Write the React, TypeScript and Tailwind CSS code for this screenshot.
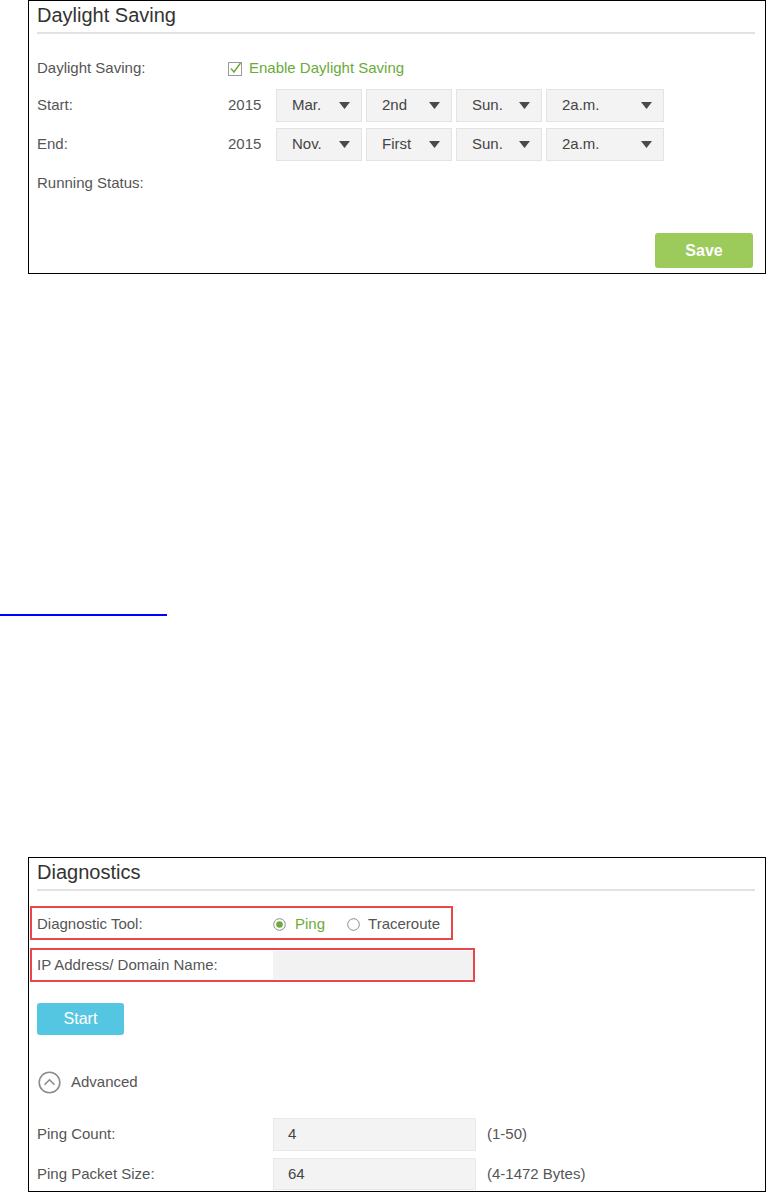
import React from 'react';

const font = "font-['Liberation_Sans',Arial,sans-serif]";

function Arrow() {
  return (
    <svg width="11" height="7" viewBox="0 0 11 7" className="shrink-0">
      <path d="M0 0 H11 L5.5 7 Z" fill="#4a4a4a" />
    </svg>
  );
}

function Select({ value, width }: { value: string; width: string }) {
  return (
    <div
      className={`${width} h-full flex items-center justify-between pl-[15px] pr-[11px] bg-[#f3f3f3] border border-[#e3e3e3] text-[15px] text-[#444]`}
    >
      <span>{value}</span>
      <Arrow />
    </div>
  );
}

function DateRow({ label, values }: { label: string; values: string[] }) {
  return (
    <div className="flex items-center h-[33px]">
      <div className="w-[191px] text-[15px] text-[#555]">{label}</div>
      <div className="w-[48px] text-[15px] text-[#555]">2015</div>
      <div className="flex gap-[4px] h-full">
        <Select value={values[0]} width="w-[86px]" />
        <Select value={values[1]} width="w-[86px]" />
        <Select value={values[2]} width="w-[86px]" />
        <Select value={values[3]} width="w-[118px]" />
      </div>
    </div>
  );
}

function PanelTitle({ title }: { title: string }) {
  return (
    <>
      <div className="pl-[8px] pt-[3px] h-[26px] leading-[23px] text-[20px] text-[#333]">
        {title}
      </div>
      <div className="ml-[8px] mr-[10px] mt-[5px] h-[2px] bg-[#e2e2e2]" />
    </>
  );
}

function Field({ value }: { value: string }) {
  return (
    <div className="w-[203px] h-full flex items-center pl-[14px] bg-[#f3f3f3] border border-[#e8e8e8] text-[15px] text-[#444]">
      {value}
    </div>
  );
}

export default function App() {
  return (
    <div className={`w-[767px] h-[1193px] bg-white overflow-hidden ${font}`}>
      {/* Daylight saving panel */}
      <div className="ml-[28px] w-[738px] h-[274px] border border-black">
        <PanelTitle title="Daylight Saving" />
        <div className="pl-[8px]">
          <div className="mt-[17px] h-[35px] flex items-center">
            <div className="w-[191px] text-[15px] text-[#555]">Daylight Saving:</div>
            <svg width="15" height="15" viewBox="0 0 15 15" className="mr-[6px]">
              <rect x="0.5" y="1.5" width="13" height="13" fill="none" stroke="#9a9a9a" />
              <path d="M3 7.5 L6 11 L12.5 2" fill="none" stroke="#6aab3a" strokeWidth="1.4" />
            </svg>
            <span className="text-[15px] text-[#6aab3a]">Enable Daylight Saving</span>
          </div>
          <div className="mt-[3px]">
            <DateRow label="Start:" values={['Mar.', '2nd', 'Sun.', '2a.m.']} />
          </div>
          <div className="mt-[6px]">
            <DateRow label="End:" values={['Nov.', 'First', 'Sun.', '2a.m.']} />
          </div>
          <div className="mt-[5px] h-[34px] flex items-center text-[15px] text-[#555]">
            Running Status:
          </div>
          <div className="mt-[33px] flex justify-end pr-[12px]">
            <button className="w-[98px] h-[35px] rounded-[3px] bg-[#9ccb5b] text-white text-[16px] font-bold">
              Save
            </button>
          </div>
        </div>
      </div>

      {/* link underline */}
      <div className="mt-[340px] w-[167px] h-[2px] bg-[#0000ff]" />

      {/* Diagnostics panel */}
      <div className="mt-[241px] ml-[28px] w-[738px] h-[335px] border border-black">
        <PanelTitle title="Diagnostics" />
        <div className="ml-[1px] mt-[15px] w-[423px] h-[34px] border-2 border-[#e8474a] flex items-center pl-[5px] pt-[3px]">
          <div className="w-[236px] text-[15px] text-[#555]">Diagnostic Tool:</div>
          <svg width="13" height="13" viewBox="0 0 13 13" className="mr-[9px]">
            <circle cx="6.5" cy="6.5" r="5.8" fill="none" stroke="#8a8a8a" strokeWidth="1" />
            <circle cx="6.5" cy="6.5" r="3.3" fill="#6aab3a" />
          </svg>
          <span className="text-[15px] text-[#6aab3a] mr-[22px]">Ping</span>
          <svg width="13" height="13" viewBox="0 0 13 13" className="mr-[8px]">
            <circle cx="6.5" cy="6.5" r="5.8" fill="none" stroke="#8a8a8a" strokeWidth="1" />
          </svg>
          <span className="text-[15px] text-[#555]">Traceroute</span>
        </div>
        <div className="ml-[1px] mt-[8px] w-[445px] h-[34px] border-2 border-[#e8474a] flex items-center pl-[5px]">
          <div className="w-[236px] text-[15px] text-[#555]">IP Address/ Domain Name:</div>
          <div className="w-[200px] h-[28px] bg-[#f2f2f2]" />
        </div>
        <div className="pl-[8px]">
          <button className="mt-[21px] w-[87px] h-[32px] rounded-[3px] bg-[#55c6e2] text-white text-[16px] block">
            Start
          </button>
          <div className="mt-[36px] h-[22px] flex items-center">
            <svg width="23" height="23" viewBox="0 0 23 23" className="ml-[1px] mr-[10px]">
              <circle cx="11.5" cy="11.5" r="10.3" fill="none" stroke="#8c8c8c" strokeWidth="1.6" />
              <path d="M6.5 13.8 L11.5 8.8 L16.5 13.8" fill="none" stroke="#8c8c8c" strokeWidth="1.6" />
            </svg>
            <span className="text-[15px] text-[#555]">Advanced</span>
          </div>
          <div className="mt-[25px] h-[33px] flex items-center">
            <div className="w-[236px] text-[15px] text-[#555]">Ping Count:</div>
            <Field value="4" />
            <span className="ml-[11px] text-[15px] text-[#555]">(1-50)</span>
          </div>
          <div className="mt-[7px] h-[32px] flex items-center">
            <div className="w-[236px] text-[15px] text-[#555]">Ping Packet Size:</div>
            <Field value="64" />
            <span className="ml-[11px] text-[15px] text-[#555]">(4-1472 Bytes)</span>
          </div>
        </div>
      </div>
    </div>
  );
}
